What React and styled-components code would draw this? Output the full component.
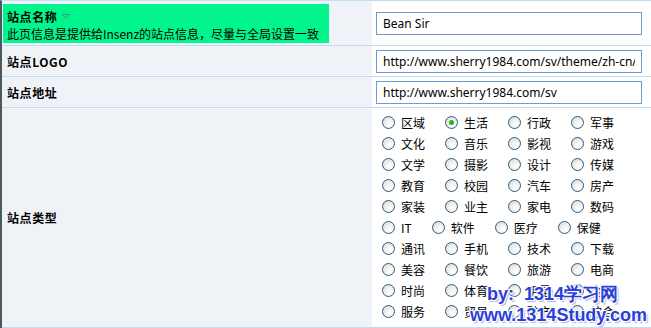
import React from "react";
import styled, { createGlobalStyle } from "styled-components";

const GlobalStyle = createGlobalStyle`
  html, body {
    margin: 0;
    padding: 0;
    background: #ffffff;
  }
  body {
    font-family: "Noto Sans CJK SC", "Noto Sans", sans-serif;
    font-size: 12px;
    color: #000;
  }
`;

const Page = styled.div`
  position: relative;
  width: 651px;
  height: 328px;
  overflow: hidden;
`;

const Form = styled.div`
  border-left: 2px solid #4b5a5c;
  border-top: 1px solid #bfdcf0;
`;

const Row = styled.div`
  display: grid;
  grid-template-columns: 370px 1fr;
  height: ${(p) => p.h}px;
  border-bottom: 1px solid #bfdcf0;
`;

const LabelCell = styled.div`
  background: #eff3f7;
  display: flex;
  align-items: center;
  padding-left: 5px;
`;

const HintCell = styled.div`
  background: #eff3f7;
  padding: 3px 0 0 1px;
`;

const Hint = styled.div`
  width: 326px;
  height: 39px;
  background: #02f58d;
  box-sizing: border-box;
  padding: 4px 0 0 4px;
  line-height: 17px;
`;

const Title = styled.span`
  font-weight: bold;
  letter-spacing: 0.6px;
  display: inline-flex;
  align-items: center;
  gap: 5px;
`;

const FieldCell = styled.div`
  display: flex;
  align-items: center;
  padding-left: 4px;
`;

const TextInput = styled.input`
  width: 266px;
  height: 23px;
  box-sizing: border-box;
  border: 1px solid #6f9bd3;
  padding: 0 6px;
  font-family: "Noto Sans", "DejaVu Sans", sans-serif;
  font-size: 12px;
  color: #000;
  background: #fff;
  outline: none;
`;

const TypeCell = styled.div`
  display: flex;
  flex-wrap: wrap;
  align-content: flex-start;
  padding: 4px 0 0 10px;
`;

const Choice = styled.label`
  display: inline-flex;
  align-items: center;
  height: 21px;
  margin-right: 20px;
  line-height: 21px;
`;

const Radio = styled.span`
  width: 13px;
  height: 13px;
  box-sizing: border-box;
  border-radius: 50%;
  border: 1px solid #2c5b80;
  background: radial-gradient(circle at 65% 70%, #ffffff 0%, #f4f4f2 35%, #d6d6d2 100%);
  margin-right: 6px;
  display: inline-flex;
  align-items: center;
  justify-content: center;
  &::after {
    content: "";
    width: 5px;
    height: 5px;
    border-radius: 50%;
    background: ${(p) => (p.checked ? "#22b322" : "transparent")};
  }
`;

const Watermark = styled.div`
  position: absolute;
  left: 470px;
  top: 284px;
  font-family: "Liberation Sans", Arial, sans-serif;
  font-weight: bold;
  font-size: 18px;
  line-height: 21px;
  color: #2d3fd8;
  text-shadow: 1px 1px 0 #fff, -1px -1px 0 #fff, 1px -1px 0 #fff, -1px 1px 0 #fff,
    2px 2px 1px rgba(120, 130, 200, 0.6);
  white-space: pre;
`;

const WaterLine = styled.div`
  padding-left: ${(p) => p.indent || 0}px;
`;

const Caret = () => (
  <svg width="8" height="5" viewBox="0 0 8 5">
    <path d="M0.5 0.5 H7.5 L4 4.5 Z" fill="none" stroke="#3b9c8c" strokeWidth="1" />
  </svg>
);

const types = [
  "区域", "生活", "行政", "军事",
  "文化", "音乐", "影视", "游戏",
  "文学", "摄影", "设计", "传媒",
  "教育", "校园", "汽车", "房产",
  "家装", "业主", "家电", "数码",
  "IT", "软件", "医疗", "保健",
  "通讯", "手机", "技术", "下载",
  "美容", "餐饮", "旅游", "电商",
  "时尚", "体育", "明星", "金融",
  "服务", "贸易", "矿产", "综合",
];

export default function App() {
  return (
    <Page>
      <GlobalStyle />
      <Form>
        <Row h={44}>
          <HintCell>
            <Hint>
              <Title>
                站点名称 <Caret />
              </Title>
              <div>此页信息是提供给Insenz的站点信息，尽量与全局设置一致</div>
            </Hint>
          </HintCell>
          <FieldCell>
            <TextInput defaultValue="Bean Sir" />
          </FieldCell>
        </Row>
        <Row h={30}>
          <LabelCell>
            <Title>站点LOGO</Title>
          </LabelCell>
          <FieldCell>
            <TextInput defaultValue="http://www.sherry1984.com/sv/theme/zh-cn/misc/logo.gif" />
          </FieldCell>
        </Row>
        <Row h={30}>
          <LabelCell>
            <Title>站点地址</Title>
          </LabelCell>
          <FieldCell>
            <TextInput defaultValue="http://www.sherry1984.com/sv" />
          </FieldCell>
        </Row>
        <Row h={219}>
          <LabelCell>
            <Title>站点类型</Title>
          </LabelCell>
          <TypeCell>
            {types.map((t) => (
              <Choice key={t}>
                <Radio checked={t === "生活"} />
                {t}
              </Choice>
            ))}
          </TypeCell>
        </Row>
      </Form>
      <Watermark>
        <WaterLine indent={17}>by:  1314学习网</WaterLine>
        <WaterLine>www.1314Study.com</WaterLine>
      </Watermark>
    </Page>
  );
}
